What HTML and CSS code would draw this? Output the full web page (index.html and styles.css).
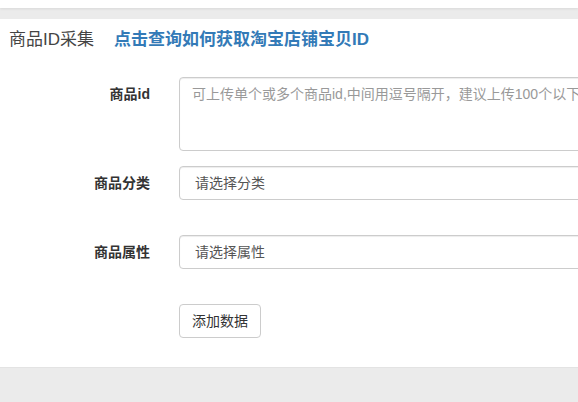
FILE: index.html
```html
<!DOCTYPE html>
<html lang="zh-CN">
<head>
<meta charset="utf-8">
<title>商品ID采集</title>
<link rel="stylesheet" href="styles.css">
</head>
<body>
<div class="topbar"></div>
<div class="panel">
  <div class="panel-head">
    <span class="title">商品ID采集</span>
    <a class="help-link" href="#">点击查询如何获取淘宝店铺宝贝ID</a>
  </div>
  <form class="form">
    <div class="row row-first">
      <label class="label" for="ids">商品id</label>
      <textarea id="ids" class="control area" placeholder="可上传单个或多个商品id,中间用逗号隔开，建议上传100个以下"></textarea>
    </div>
    <div class="row">
      <label class="label" for="cat">商品分类</label>
      <select id="cat" class="control sel"><option>请选择分类</option></select>
    </div>
    <div class="row">
      <label class="label" for="attr">商品属性</label>
      <select id="attr" class="control sel"><option>请选择属性</option></select>
    </div>
    <div class="row">
      <span class="label"></span>
      <div><button type="button" class="btn">添加数据</button></div>
    </div>
  </form>
</div>
</body>
</html>
```
FILE: styles.css
```css
html, body {
  margin: 0;
  padding: 0;
}
body {
  background: #ebebeb;
  overflow: hidden;
  font-family: "Liberation Sans", "Noto Sans CJK SC", sans-serif;
  color: #333;
  font-size: 14px;
}
.topbar {
  height: 8px;
  background: #fff;
  box-shadow: 0 1px 3px rgba(0, 0, 0, 0.08);
}
.panel {
  margin-top: 11px;
  background: #fff;
  padding: 9px 0 30px 0;
  height: 309px;
  border-bottom: 1px solid #e3e3e3;
  overflow: hidden;
}
.panel-head {
  padding-left: 9px;
  display: flex;
  gap: 20px;
  align-items: center;
  height: 24px;
  font-size: 17px;
  line-height: 24px;
}
.title {
  color: #444;
}
.help-link {
  color: #337ab7;
  font-weight: bold;
  text-decoration: none;
}
.form {
  margin-top: 25px;
  display: flex;
  flex-direction: column;
  gap: 35px;
}
.row {
  display: grid;
  grid-template-columns: 150px 1fr;
  column-gap: 29px;
  align-items: start;
  margin-right: -60px;
}
.row-first {
  margin-bottom: -20px;
}
.label {
  text-align: right;
  font-weight: bold;
  padding-top: 7px;
  line-height: 20px;
  color: #333;
}
.control {
  box-sizing: border-box;
  width: 100%;
  border: 1px solid #ccc;
  border-radius: 4px;
  background: #fff;
  font-family: inherit;
  font-size: 14px;
  line-height: 20px;
  color: #555;
  box-shadow: inset 0 1px 1px rgba(0, 0, 0, 0.075);
  margin: 0;
}
.area {
  height: 74px;
  padding: 6px 12px;
  resize: none;
  display: block;
}
.area::placeholder {
  color: #999;
}
.sel {
  height: 34px;
  padding: 6px 15px;
  -webkit-appearance: none;
  appearance: none;
  display: block;
}
.btn {
  box-sizing: border-box;
  height: 34px;
  padding: 6px 12px;
  border: 1px solid #ccc;
  border-radius: 4px;
  background: #fff;
  color: #333;
  font-family: inherit;
  font-size: 14px;
  line-height: 20px;
  margin: 0;
}
```
